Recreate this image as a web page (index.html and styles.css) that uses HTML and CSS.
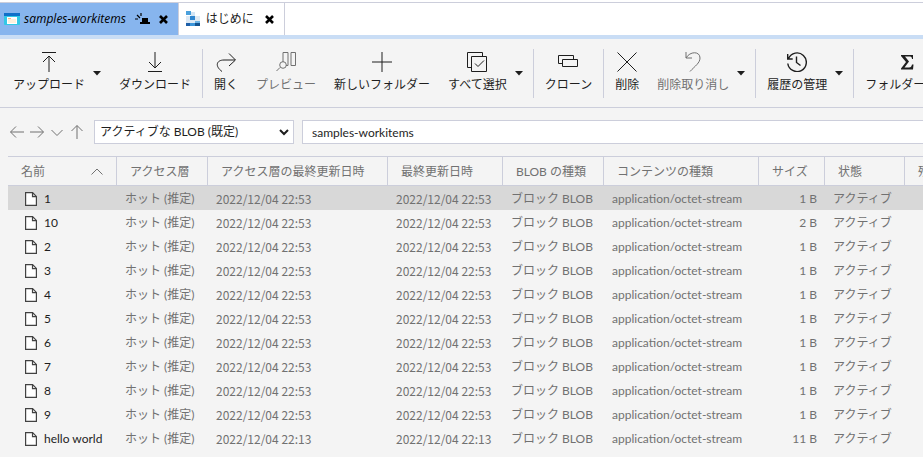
FILE: index.html
```html
<!DOCTYPE html>
<html lang="ja">
<head>
    <meta charset="UTF-8">
    <meta name="viewport" content="width=device-width, initial-scale=1.0">
    <title>samples-workitems</title>
    <link rel="stylesheet" href="styles.css">
</head>
<body>
    <div class="tabs">
        <div class="tab active">
            <svg class="tab-icon" width="16" height="12" viewBox="0 0 16 12"><rect width="16" height="12" rx="1" fill="#32c8e6"/><rect width="16" height="3" fill="#0f70c9"/><rect x="3" y="4" width="10" height="7" fill="#fff"/><rect x="4" y="6" width="8" height="4" fill="#fdf0dc"/><path d="M4 5h3v1H4z" fill="#f3b98a"/></svg>
            <span class="tab-title">samples-workitems</span>
            <svg class="pin" width="16" height="12" viewBox="0 0 16 12"><path d="M7 5h6v4H7zM5 9h10v2H5z" fill="#000"/><path d="M0 6h3M2 2l3 3M6 0v3" stroke="#000" stroke-width="1.2" fill="none"/></svg>
            <button class="close" aria-label="閉じる"><svg width="9" height="9" viewBox="0 0 9 9"><path d="M1 1l7 7M8 1L1 8" stroke="#000" stroke-width="2.6"/></svg></button>
        </div>
        <div class="tab">
            <svg class="tab-icon" width="14" height="16" viewBox="0 0 14 16"><path d="M0 0h5v4H0z" fill="#4aa0dc"/><path d="M5 1h4v4H5z" fill="#d3e5f4"/><path d="M4 5h5v4H4z" fill="#2f86cf"/><path d="M9 5h5v5H9z" fill="#dfe9f2"/><path d="M0 5h4v7H0zM4 9h5v3H4z" fill="#dbe8f4"/><path d="M0 12h4v3H0z" fill="#1d5fa8"/><path d="M4 12h5v3H4z" fill="#3b95da"/><path d="M9 12h5v3H9z" fill="#12528f"/><path d="M9 10h5v2H9z" fill="#6db3e4"/></svg>
            <span class="tab-title">はじめに</span>
            <button class="close" aria-label="閉じる"><svg width="9" height="9" viewBox="0 0 9 9"><path d="M1 1l7 7M8 1L1 8" stroke="#000" stroke-width="2.6"/></svg></button>
        </div>
    </div>

    <div class="toolbar">
        <div class="group">
            <div class="split">
                <button class="tool"><svg viewBox="0 0 20 20"><path d="M3 .5h14M10 20V4M4 10l6-6 6 6"/></svg>アップロード</button>
                <button class="caret" aria-label="アップロードのメニュー"><svg width="8" height="5" viewBox="0 0 8 5"><path d="M0 0h8L4 4.5z"/></svg></button>
            </div>
            <button class="tool"><svg viewBox="0 0 20 20"><path d="M3 19.5h14M10 0v16M4 10l6 6 6-6"/></svg>ダウンロード</button>
        </div>
        <div class="group">
            <button class="tool"><svg viewBox="0 0 20 20"><path d="M6 19.5C-1.5 14 .5 8 8 8h11M13 1.5L19.5 8 13 14"/></svg>開く</button>
            <button class="tool" disabled><svg viewBox="0 0 20 20"><path d="M7 10V.5h5v13h-2M15 .5h4.5v13H15zM4 15.5L.5 19"/><circle cx="7" cy="13" r="3.3"/></svg>プレビュー</button>
            <button class="tool"><svg viewBox="0 0 20 20"><path d="M10 0v20M0 10h20"/></svg>新しいフォルダー</button>
            <div class="split">
                <button class="tool"><svg viewBox="0 0 20 20"><path d="M4 15.5H.5V.5h15V4M4.5 4.5h15v15h-15zM8 11.5l3 3 6-6"/></svg>すべて選択</button>
                <button class="caret" aria-label="選択のメニュー"><svg width="8" height="5" viewBox="0 0 8 5"><path d="M0 0h8L4 4.5z"/></svg></button>
            </div>
        </div>
        <div class="group">
            <button class="tool"><svg viewBox="0 0 20 20"><path d="M4 11.5H.5v-8h15V7M4.5 7.5h15v7h-15z"/></svg>クローン</button>
        </div>
        <div class="group">
            <button class="tool"><svg viewBox="0 0 20 20"><path d="M.5.5l19 19M19.5.5l-19 19"/></svg>削除</button>
            <div class="split">
                <button class="tool" disabled><svg viewBox="0 0 20 20"><path d="M3 0v6h6M3 6C7-1 17-1 17 6c0 5-5 8-10 13.5"/></svg>削除取り消し</button>
                <button class="caret" aria-label="削除取り消しのメニュー"><svg width="8" height="5" viewBox="0 0 8 5"><path d="M0 0h8L4 4.5z"/></svg></button>
            </div>
        </div>
        <div class="group">
            <div class="split">
                <button class="tool"><svg viewBox="0 0 20 20"><path d="M.7 2v5h5M1.5 6.5a9.3 9.3 0 1 1-.7 5M9.5 4.5v6l4 3" stroke-width="1.4"/></svg>履歴の管理</button>
                <button class="caret" aria-label="履歴のメニュー"><svg width="8" height="5" viewBox="0 0 8 5"><path d="M0 0h8L4 4.5z"/></svg></button>
            </div>
        </div>
        <div class="group">
            <button class="tool"><svg viewBox="0 0 20 20"><path class="solid" d="M4 3h12v4h-1c0-2-1-2.5-3-2.5H8l4 5-4.5 6H12c2 0 2.5-1 3-3h1.5l-.5 5H4v-1l5-6.5-5-6z"/></svg>フォルダー統計</button>
        </div>
    </div>

    <div class="address">
        <div class="nav">
            <button aria-label="戻る"><svg viewBox="0 0 14 14"><path d="M14 7H.7M6 1.5L.5 7 6 12.5"/></svg></button>
            <button aria-label="進む"><svg viewBox="0 0 14 14"><path d="M0 7h13.3M8 1.5L13.5 7 8 12.5"/></svg></button>
            <button aria-label="履歴"><svg viewBox="0 0 14 14"><path d="M1.5 5L7 10.5 12.5 5"/></svg></button>
            <button aria-label="上へ"><svg viewBox="0 0 14 14"><path d="M7 14V.7M1.5 6L7 .5 12.5 6"/></svg></button>
        </div>
        <div class="view">
            <select aria-label="表示">
                <option>アクティブな BLOB (既定)</option>
            </select>
            <svg class="chevron" width="10" height="7" viewBox="0 0 10 7"><path d="M1 1l4 4 4-4"/></svg>
        </div>
        <input type="text" aria-label="パス" value="samples-workitems">
    </div>

    <div class="list">
        <table>
            <colgroup>
                <col class="c-name"><col class="c-tier"><col class="c-tiermod"><col class="c-mod"><col class="c-kind"><col class="c-content"><col class="c-size"><col class="c-state"><col class="c-days">
            </colgroup>
            <thead>
                <tr>
                    <th><div class="sorted">名前<svg width="12" height="7" viewBox="0 0 12 7"><path d="M.5 6.5L6 1l5.5 5.5"/></svg></div></th>
                    <th>アクセス層</th>
                    <th>アクセス層の最終更新日時</th>
                    <th>最終更新日時</th>
                    <th>BLOB の種類</th>
                    <th>コンテンツの種類</th>
                    <th>サイズ</th>
                    <th>状態</th>
                    <th>残りの日数</th>
                </tr>
            </thead>
            <tbody id="blobList"></tbody>
        </table>
    </div>

    <script>
        const blobs = [
            { name: '1', size: '1 B', selected: true },
            { name: '10', size: '2 B' },
            { name: '2', size: '1 B' },
            { name: '3', size: '1 B' },
            { name: '4', size: '1 B' },
            { name: '5', size: '1 B' },
            { name: '6', size: '1 B' },
            { name: '7', size: '1 B' },
            { name: '8', size: '1 B' },
            { name: '9', size: '1 B' },
            { name: 'hello world', size: '11 B', date: '2022/12/04 22:13' }
        ];
        const blobList = document.getElementById('blobList');
        blobs.forEach(blob => {
            const date = blob.date || '2022/12/04 22:53';
            const row = document.createElement('tr');
            if (blob.selected) {
                row.className = 'selected';
            }
            row.innerHTML = `
                <td><div class="file"><svg width="12" height="14" viewBox="0 0 12 14"><path d="M.6.6h7l3.8 3.8v9H.6zM7.5.6v4h4"/></svg>${blob.name}</div></td>
                <td>ホット (推定)</td>
                <td class="date">${date}</td>
                <td class="date">${date}</td>
                <td>ブロック BLOB</td>
                <td>application/octet-stream</td>
                <td class="size">${blob.size}</td>
                <td>アクティブ</td>
                <td></td>
            `;
            blobList.appendChild(row);
        });
    </script>
</body>
</html>
```

FILE: styles.css
```css
* {
    box-sizing: border-box;
}
body {
    margin: 0;
    min-height: 100vh;
    background: #f4f4f4;
    color: #1e1e1e;
    font: 12px/16px Lato, "Noto Sans CJK JP", sans-serif;
    overflow: hidden;
}
button {
    border: 0;
    padding: 0;
    background: none;
    color: inherit;
    font: inherit;
}
svg {
    flex: none;
    display: block;
}

/* tabs */
.tabs {
    display: flex;
    margin-top: 2px;
    border-top: 1px solid #cccedb;
    border-bottom: 4px solid #c9ddf5;
    background: #fff;
    box-shadow: 0 -2px #fff;
}
.tab {
    display: flex;
    align-items: center;
    height: 32px;
    padding: 0 10px 0 7px;
    border-right: 1px solid #cccedb;
}
.tab.active {
    padding-left: 4px;
    background: #87b5ee;
    font-family: "Open Sans", sans-serif;
    font-style: italic;
    font-weight: 500;
    color: #000;
}
.tab-title {
    margin: 0 11px 0 6px;
}
.active .tab-title {
    margin: 0 9px 0 4px;
}
.pin {
    margin-right: 8px;
}

/* toolbar */
.toolbar {
    display: flex;
    padding: 10px 0 9px;
    border-bottom: 1px solid #cccedb;
    overflow: hidden;
}
.group {
    display: flex;
    flex: none;
    gap: 18px;
    padding: 0 11px;
    border-left: 1px solid #cccedb;
}
.group:first-child {
    padding-left: 13px;
    border-left: 0;
}
.group:has(.split:last-child) {
    padding-right: 10px;
}
.split {
    display: flex;
    gap: 8px;
}
.tool {
    display: flex;
    flex-direction: column;
    align-items: center;
    gap: 5px;
    height: 49px;
    padding-top: 3px;
    white-space: nowrap;
}
.tool svg {
    width: 20px;
    height: 20px;
    fill: none;
    stroke: #1e1e1e;
}
.tool .solid {
    fill: #1e1e1e;
    stroke: none;
}
.tool:disabled {
    color: #717171;
}
.tool:disabled svg {
    stroke: #717171;
}
.caret {
    fill: #1e1e1e;
}

/* address bar */
.address {
    display: flex;
    align-items: center;
    padding: 12px 0 12px 10px;
}
.nav {
    display: flex;
    gap: 6px;
    margin-right: 10px;
}
.nav svg {
    width: 14px;
    height: 14px;
    fill: none;
    stroke: #717171;
}
.view {
    position: relative;
    margin-right: 8px;
}
select, input {
    height: 24px;
    border: 1px solid #cccedb;
    border-radius: 0;
    background: #fff;
    color: #1e1e1e;
    font: inherit;
}
select {
    width: 200px;
    padding: 0 20px 0 5px;
    appearance: none;
}
.chevron {
    position: absolute;
    top: 9px;
    right: 5px;
    fill: none;
    stroke: #1e1e1e;
    stroke-width: 2;
    pointer-events: none;
}
input {
    flex: 1;
    padding: 0 9px;
    border-right: 0;
}

/* blob list */
.list {
    padding-left: 8px;
    overflow: hidden;
}
table {
    width: 1024px;
    table-layout: fixed;
    border-collapse: separate;
    border-spacing: 0;
    color: #717171;
    white-space: nowrap;
}
.c-name { width: 109px; }
.c-tier { width: 91px; }
.c-tiermod { width: 180px; }
.c-mod { width: 115px; }
.c-kind { width: 101px; }
.c-content { width: 155px; }
.c-size { width: 66px; }
.c-state { width: 80px; }
th {
    height: 30px;
    padding: 1px 0 0 13px;
    border: 1px solid #cccedb;
    border-left: 0;
    font-weight: normal;
    text-align: left;
}
td {
    height: 24px;
    padding: 1px 0 0 8px;
}
.sorted {
    display: flex;
    align-items: center;
    justify-content: space-between;
    padding-right: 13px;
}
.sorted svg {
    fill: none;
    stroke: #717171;
}
.file {
    display: flex;
    align-items: center;
    gap: 7px;
    padding-left: 9px;
    color: #1e1e1e;
}
.file svg {
    fill: #fff;
    stroke: #424242;
    stroke-width: 1.2;
}
.date {
    font-family: "Noto Sans CJK JP", sans-serif;
}
.size {
    padding-right: 8px;
    text-align: right;
}
.selected td {
    background: #d8d8d8;
}
```
